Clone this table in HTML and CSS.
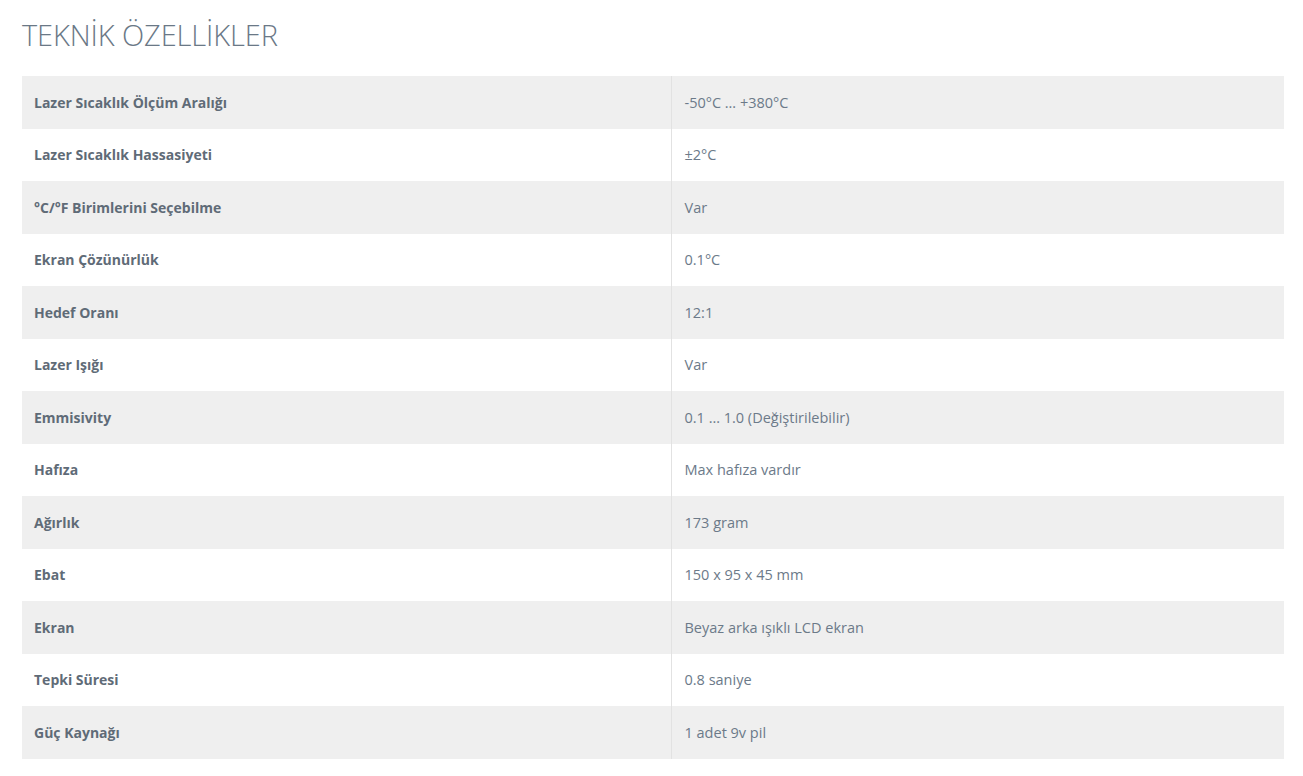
FILE: index.html
```html
<!DOCTYPE html>
<html lang="tr">
<head>
<meta charset="utf-8">
<title>Teknik Özellikler</title>
<link rel="stylesheet" href="styles.css">
</head>
<body>
<div class="page">
  <h2 class="title">TEKNİK ÖZELLİKLER</h2>
  <table class="specs">
    <colgroup><col class="c-label"><col class="c-value"></colgroup>
    <tbody>
      <tr><th>Lazer Sıcaklık Ölçüm Aralığı</th><td>-50°C … +380°C</td></tr>
      <tr><th>Lazer Sıcaklık Hassasiyeti</th><td>±2°C</td></tr>
      <tr><th>°C/°F Birimlerini Seçebilme</th><td>Var</td></tr>
      <tr><th>Ekran Çözünürlük</th><td>0.1°C</td></tr>
      <tr><th>Hedef Oranı</th><td>12:1</td></tr>
      <tr><th>Lazer Işığı</th><td>Var</td></tr>
      <tr><th>Emmisivity</th><td>0.1 … 1.0 (Değiştirilebilir)</td></tr>
      <tr><th>Hafıza</th><td>Max hafıza vardır</td></tr>
      <tr><th>Ağırlık</th><td>173 gram</td></tr>
      <tr><th>Ebat</th><td>150 x 95 x 45 mm</td></tr>
      <tr><th>Ekran</th><td>Beyaz arka ışıklı LCD ekran</td></tr>
      <tr><th>Tepki Süresi</th><td>0.8 saniye</td></tr>
      <tr><th>Güç Kaynağı</th><td>1 adet 9v pil</td></tr>
    </tbody>
  </table>
</div>
</body>
</html>
```

FILE: styles.css
```css
html, body {
  margin: 0;
  padding: 0;
  background: #ffffff;
}
body {
  font-family: "Open Sans", "Lato", sans-serif;
  color: #6c7a89;
}
.page {
  padding: 17px 19px 0 22px;
}
.title {
  margin: 0 0 24px 0;
  font-family: "Open Sans", sans-serif;
  font-weight: 300;
  font-size: 29px;
  line-height: 35px;
  letter-spacing: -0.1px;
  color: #6a7886;
}
.specs {
  width: 1262px;
  border-collapse: collapse;
  table-layout: fixed;
}
.c-label { width: 649px; }
.specs tr { height: 52.5px; }
.specs tr:nth-child(odd) { background: #efefef; }
.specs th,
.specs td {
  padding: 0 12px;
  vertical-align: middle;
  text-align: left;
}
.specs th {
  font-size: 14px;
  font-weight: 700;
  color: #5f6b77;
}
.specs td {
  font-size: 14.5px;
  font-weight: 400;
  color: #6c7a89;
  border-left: 1px solid #e2e2e2;
  padding-left: 13px;
}
```
